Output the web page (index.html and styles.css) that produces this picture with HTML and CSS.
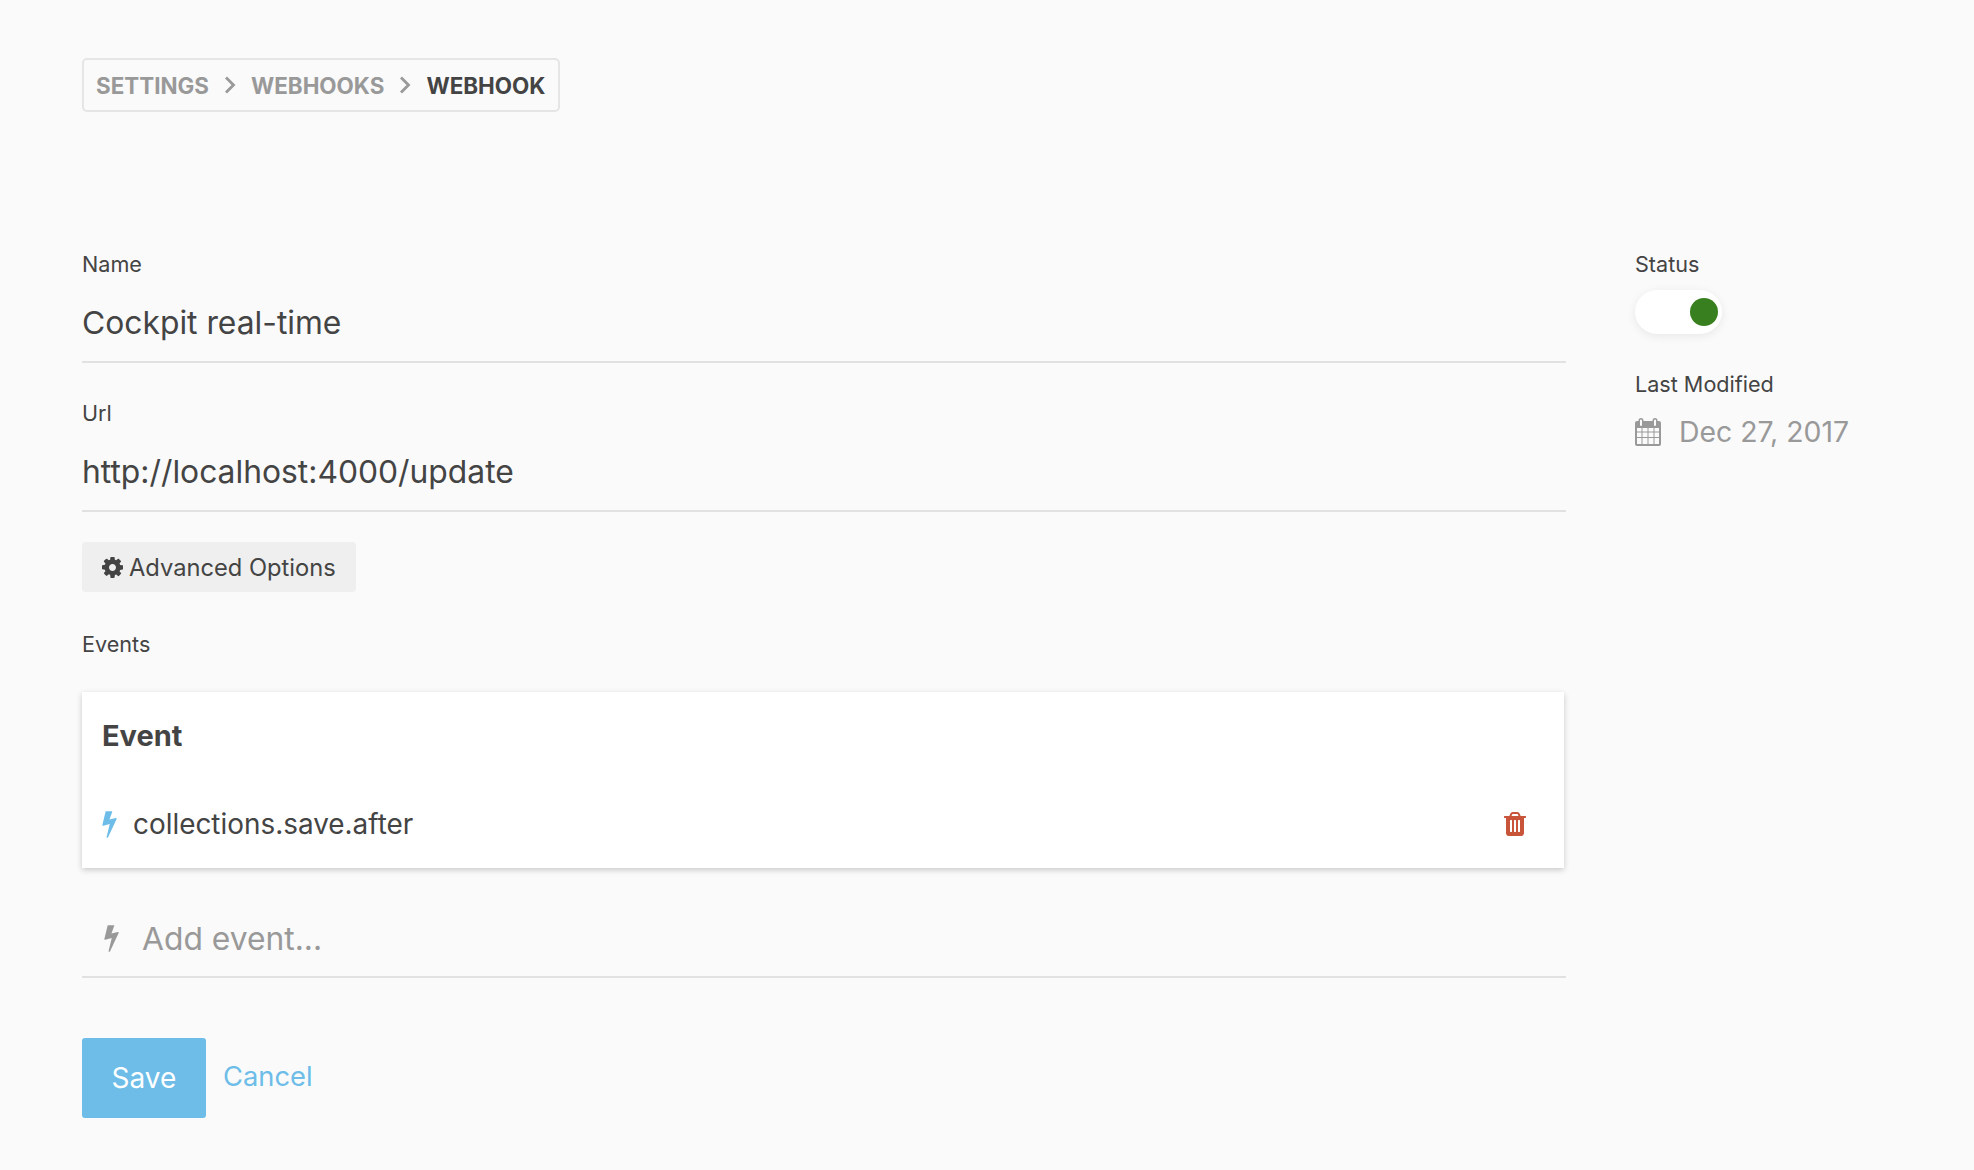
FILE: index.html
```html
<!DOCTYPE html>
<html lang="en">
<head>
    <meta charset="UTF-8">
    <title>Webhook</title>
    <link rel="stylesheet" href="styles.css">
</head>
<body>
    <nav class="breadcrumbs">
        <a href="#">Settings</a>
        <svg class="crumb-sep" viewBox="0 0 12 18"><path d="M2 1.500l7.500 7.500-7.500 7.500" fill="none" stroke="currentColor" stroke-width="2.800"/></svg>
        <a href="#">Webhooks</a>
        <svg class="crumb-sep" viewBox="0 0 12 18"><path d="M2 1.500l7.500 7.500-7.500 7.500" fill="none" stroke="currentColor" stroke-width="2.800"/></svg>
        <span class="current">Webhook</span>
    </nav>

    <div class="page">
        <form class="main-col">
            <div class="field">
                <label>Name</label>
                <div class="big-input">Cockpit real-time</div>
            </div>
            <div class="field field-last">
                <label>Url</label>
                <div class="big-input">http://localhost:4000/update</div>
            </div>

            <a class="btn-options" href="#">
                <svg class="gear" viewBox="0 0 1536 1536"><path fill="currentColor" d="M1024 768q0-106-75-181t-181-75-181 75-75 181 75 181 181 75 181-75 75-181zm512-109v222q0 12-8 23t-20 13l-185 28q-19 54-39 91 35 50 107 138 10 12 10 25t-9 23q-27 37-99 108t-94 71q-12 0-26-9l-138-108q-44 23-91 38-16 136-29 186-7 28-36 28H657q-14 0-24.500-8.500T621 1491l-28-184q-49-16-90-37l-141 107q-10 9-25 9-14 0-25-11-126-114-165-168-7-10-7-23 0-12 8-23 15-21 51-66.500t54-70.500q-27-50-41-99L29 897q-13-2-21-12.500T0 861V639q0-12 8-23t19-13l186-28q14-46 39-92-40-57-107-138-10-12-10-24 0-10 9-23 26-36 98.500-107.500T337 119q13 0 26 10l138 107q44-23 91-38 16-136 29-186 7-28 36-28h222q14 0 24.500 8.500T915 14l28 184q49 16 90 37l142-107q9-9 24-9 13 0 25 10 129 119 165 170 7 8 7 22 0 12-8 23-15 21-51 66.500t-54 70.500q26 50 41 98l183 28q13 2 21 12.500t8 23.500z"/></svg>
                Advanced Options
            </a>

            <div class="events">
                <label>Events</label>
                <div class="event-card">
                    <h3>Event</h3>
                    <div class="event-row">
                        <svg class="bolt" viewBox="440 120 910 1680"><path fill="currentColor" d="M1333 566q18 20 7 44l-540 1157q-13 25-42 25-4 0-14-2-17-5-25.500-19t-4.500-30l197-808-406 101q-4 1-12 1-18 0-31-11-18-15-13-39l201-825q4-14 16-23t28-9h328q19 0 32 12.500t13 29.500q0 8-5 18l-171 463 396-98q8-2 12-2 19 0 34 15z"/></svg>
                        <span class="event-name">collections.save.after</span>
                        <svg class="trash" viewBox="192 128 1408 1536"><path fill="currentColor" d="M704 1376V672q0-14-9-23t-23-9h-64q-14 0-23 9t-9 23v704q0 14 9 23t23 9h64q14 0 23-9t9-23zm256 0V672q0-14-9-23t-23-9h-64q-14 0-23 9t-9 23v704q0 14 9 23t23 9h64q14 0 23-9t9-23zm256 0V672q0-14-9-23t-23-9h-64q-14 0-23 9t-9 23v704q0 14 9 23t23 9h64q14 0 23-9t9-23zM672 384h448l-48-117q-7-9-17-11H738q-10 2-17 11zm928 32v64q0 14-9 23t-23 9h-96v948q0 83-47 143.500t-113 60.500H480q-66 0-113-58.500T320 1464V512h-96q-14 0-23-9t-9-23v-64q0-14 9-23t23-9h309l70-167q15-37 54-63t79-26h320q40 0 79 26t54 63l70 167h309q14 0 23 9t9 23z"/></svg>
                    </div>
                </div>
                <div class="add-event">
                    <svg class="bolt" viewBox="440 120 910 1680"><path fill="currentColor" d="M1333 566q18 20 7 44l-540 1157q-13 25-42 25-4 0-14-2-17-5-25.500-19t-4.500-30l197-808-406 101q-4 1-12 1-18 0-31-11-18-15-13-39l201-825q4-14 16-23t28-9h328q19 0 32 12.500t13 29.500q0 8-5 18l-171 463 396-98q8-2 12-2 19 0 34 15z"/></svg>
                    <span>Add event...</span>
                </div>
            </div>

            <div class="actions">
                <button class="btn-save" type="button">Save</button>
                <a class="link-cancel" href="#">Cancel</a>
            </div>
        </form>

        <aside class="side-col">
            <label>Status</label>
            <div class="toggle"><span class="knob"></span></div>
            <label class="modified-label">Last Modified</label>
            <div class="modified">
                <svg class="calendar" viewBox="0 0 26 28"><path fill="currentColor" fill-rule="evenodd" d="M6 0a2.500 2.500 0 0 1 2.500 2.500V3h9v-.5a2.500 2.500 0 0 1 5 0V3H24a2 2 0 0 1 2 2v21a2 2 0 0 1-2 2H2a2 2 0 0 1-2-2V5a2 2 0 0 1 2-2h1.500v-.5A2.500 2.500 0 0 1 6 0zM5 2.500V7a1 1 0 0 0 2 0V2.500a1 1 0 0 0-2 0zm14 0V7a1 1 0 0 0 2 0V2.500a1 1 0 0 0-2 0zM2 10v3.500h4.500V10zm5.500 0v3.500h5V10zm6 0v3.500h5V10zm6 0v3.500H24V10zM2 14.500V19h4.500v-4.500zm5.500 0V19h5v-4.500zm6 0V19h5v-4.500zm6 0V19H24v-4.500zM2 20v6h4.500v-6zm5.500 0v6h5v-6zm6 0v6h5v-6zm6 0v6H24v-6z"/></svg>
                Dec 27, 2017
            </div>
        </aside>
    </div>
</body>
</html>
```

FILE: styles.css
```css
* {
    box-sizing: border-box;
}

body {
    margin: 0;
    padding: 58px 82px 50px;
    background: #fafafa;
    color: #444;
    font-family: Inter, "Noto Sans", sans-serif;
    font-size: 20px;
}

a {
    text-decoration: none;
}

label {
    display: block;
    font-size: 21.6px;
    line-height: 24px;
}

/* breadcrumbs */
.breadcrumbs {
    display: inline-flex;
    align-items: center;
    height: 54px;
    padding: 0 13px 0 12px;
    border: 2px solid #e5e5e5;
    border-radius: 5px;
    font-size: 22.4px;
    font-weight: 700;
    text-transform: uppercase;
    color: #999;
}

.breadcrumbs a {
    color: #999;
}

.breadcrumbs .current {
    color: #444;
}

.crumb-sep {
    width: 12px;
    height: 18px;
    margin: 0 15px;
    color: #999;
}

/* layout */
.page {
    display: flex;
    gap: 69px;
    margin-top: 140px;
}

.main-col {
    width: 1484px;
}

.side-col {
    flex: 1;
}

/* form */
.field {
    margin-bottom: 38px;
}

.field-last {
    margin-bottom: 30px;
}

.big-input {
    padding: 28px 0 19px;
    border-bottom: 2px solid #e1e1e1;
    font-size: 31.8px;
    line-height: 38px;
}

.btn-options {
    display: inline-flex;
    align-items: center;
    gap: 6px;
    height: 50px;
    padding: 0 20px;
    border-radius: 4px;
    background: #efefef;
    color: #444;
    font-size: 23.7px;
    vertical-align: top;
}

.gear {
    width: 21px;
    height: 21px;
}

.events {
    margin-top: 40px;
}

.event-card {
    width: 1482px;
    height: 176px;
    margin-top: 36px;
    padding: 25px 20px 0;
    background: #fff;
    box-shadow: 0 2px 6px rgba(0, 0, 0, 0.2);
}

.event-card h3 {
    margin: 0;
    font-size: 29px;
    line-height: 38px;
    font-weight: 700;
}

.event-row {
    display: flex;
    align-items: center;
    margin-top: 50px;
    font-size: 27.9px;
    line-height: 38px;
}

.event-row .bolt {
    width: 15px;
    height: 27px;
    color: #6dbde8;
}

.event-name {
    flex: 1;
    margin-left: 16px;
}

.trash {
    width: 22px;
    height: 24px;
    margin-right: 18px;
    color: #c8553a;
}

.add-event {
    display: flex;
    align-items: center;
    height: 110px;
    padding: 33px 0 0 22px;
    border-bottom: 2px solid #e1e1e1;
    color: #999;
    font-size: 31.8px;
}

.add-event .bolt {
    width: 15px;
    height: 27px;
    margin-right: 23px;
}

/* buttons */
.actions {
    display: flex;
    align-items: center;
    margin-top: 60px;
}

.btn-save {
    width: 124px;
    height: 80px;
    border: 0;
    border-radius: 3px;
    background: #6dbde8;
    color: #fff;
    font-family: inherit;
    font-size: 28px;
}

.link-cancel {
    margin: -3px 0 0 17px;
    color: #6dbde8;
    font-size: 27.3px;
}

/* side column */
.toggle {
    display: flex;
    align-items: center;
    justify-content: flex-end;
    width: 87px;
    height: 44px;
    margin-top: 14px;
    padding-right: 4px;
    border-radius: 22px;
    background: #fff;
    box-shadow: 0 2px 10px rgba(0, 0, 0, 0.08);
}

.knob {
    width: 28px;
    height: 28px;
    border-radius: 50%;
    background: #38801f;
}

.modified-label {
    margin-top: 38px;
}

.modified {
    display: flex;
    align-items: center;
    gap: 18px;
    margin-top: 18px;
    color: #999;
    font-size: 28.4px;
}

.calendar {
    width: 26px;
    height: 28px;
}
```
